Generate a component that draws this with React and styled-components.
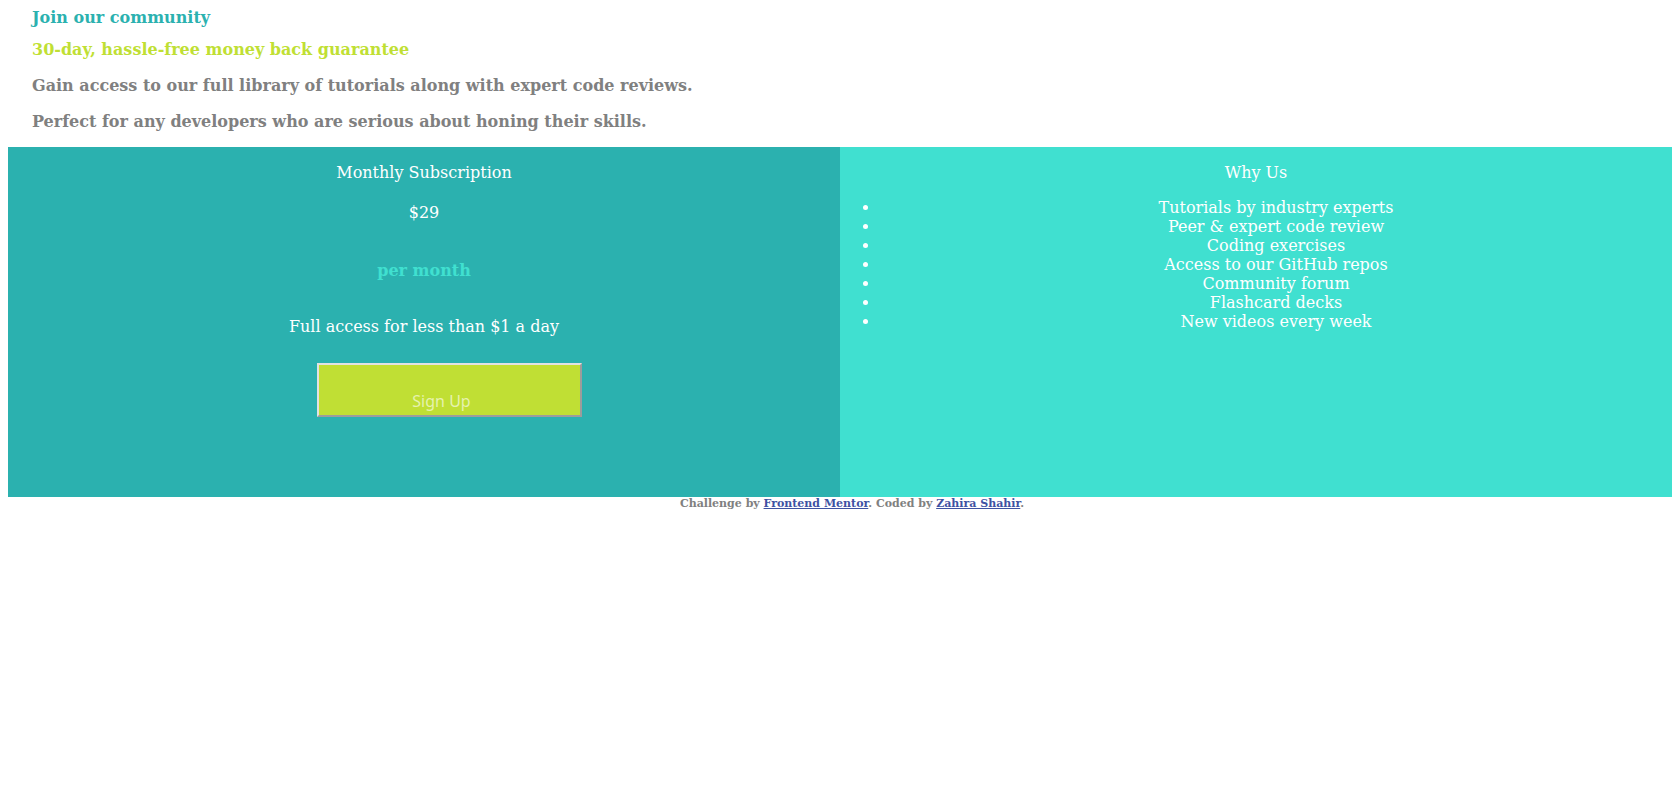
import React from 'react';
import styled, { createGlobalStyle } from 'styled-components';

const GlobalStyle = createGlobalStyle`
  body {
    margin: 8px;
    font-family: "DejaVu Serif", serif;
    font-size: 16px;
    font-weight: bold;
    color: #808080;
    background: #fff;
  }
`;

const Intro = styled.header`
  padding-left: 24px;
`;

const Line = styled.p`
  margin: 0 0 ${(p) => p.$gap}px;
  color: ${(p) => p.$color || '#808080'};
`;

const Grid = styled.main`
  display: grid;
  grid-template-columns: 1fr 1fr;
  min-height: 350px;
`;

const Panel = styled.section`
  display: flow-root;
  background: ${(p) => p.$bg};
  color: #fff;
  font-weight: normal;
  text-align: center;
`;

const Text = styled.p`
  margin: ${(p) => p.$top}px 0 0;
  font-weight: ${(p) => (p.$bold ? 'bold' : 'normal')};
  color: ${(p) => p.$color || '#fff'};
`;

const SignUp = styled.button`
  display: block;
  box-sizing: border-box;
  width: 265px;
  height: 54px;
  margin: 27px 0 0 calc(50% - 107px);
  padding: 25px 22px 3px 6px;
  background: #c0df34;
  border-style: solid;
  border-width: 2px;
  border-color: #e2e2e2 #9c9c9c #9c9c9c #e2e2e2;
  font-family: "Noto Sans", sans-serif;
  font-size: 16px;
  line-height: normal;
  color: #e6f2ae;
  cursor: pointer;
`;

const List = styled.ul`
  margin: 16px 0 0;
  padding-left: 40px;
`;

const Footer = styled.footer`
  padding-left: 24px;
  font-size: 11px;
  text-align: center;

  a {
    color: #3e52a3;
  }
`;

const perks = [
  'Tutorials by industry experts',
  'Peer & expert code review',
  'Coding exercises',
  'Access to our GitHub repos',
  'Community forum',
  'Flashcard decks',
  'New videos every week',
];

const App = () => {
  return (
    <>
      <GlobalStyle />
      <Intro>
        <Line $color="#2bb1af" $gap={13}>Join our community</Line>
        <Line $color="#c0df34" $gap={17}>30-day, hassle-free money back guarantee</Line>
        <Line $gap={17}>Gain access to our full library of tutorials along with expert code reviews.</Line>
        <Line $gap={16}>Perfect for any developers who are serious about honing their skills.</Line>
      </Intro>
      <Grid>
        <Panel $bg="#2bb1af">
          <Text $top={16}>Monthly Subscription</Text>
          <Text $top={21}>$29</Text>
          <Text $top={39} $bold $color="#40e0d0">per month</Text>
          <Text $top={37}>Full access for less than $1 a day</Text>
          <SignUp>Sign Up</SignUp>
        </Panel>
        <Panel $bg="#40e0d0">
          <Text $top={16}>Why Us</Text>
          <List>
            {perks.map((perk) => (
              <li key={perk}>{perk}</li>
            ))}
          </List>
        </Panel>
      </Grid>
      <Footer>
        Challenge by <a href="#">Frontend Mentor</a>. Coded by <a href="#">Zahira Shahir</a>.
      </Footer>
    </>
  );
};

export default App;
